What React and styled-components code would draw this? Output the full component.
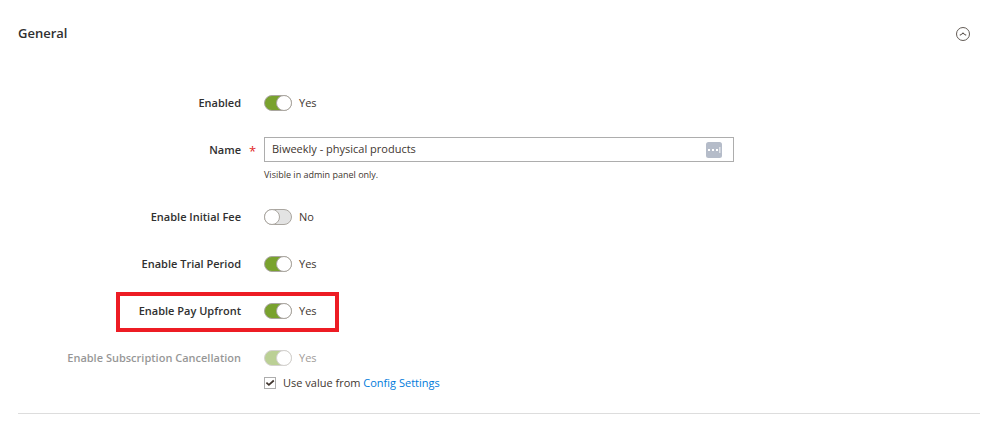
import React, { useState } from 'react'
import styled, { createGlobalStyle, css } from 'styled-components'

function ToggleField({ id, label, defaultOn, disabled, highlighted, children }) {
    const [on, setOn] = useState(defaultOn)

    return (
        <Field>
            <Label htmlFor={id} $muted={disabled}>{label}</Label>
            <Control>
                {highlighted && <Highlight />}
                <ToggleRow $muted={disabled}>
                    <Switch
                        id={id}
                        type="checkbox"
                        role="switch"
                        checked={on}
                        disabled={disabled}
                        onChange={(e) => setOn(e.target.checked)}
                    />
                    <span>{on ? 'Yes' : 'No'}</span>
                </ToggleRow>
                {children}
            </Control>
        </Field>
    )
}

function App() {
    const [open, setOpen] = useState(true)

    return (
        <>
            <GlobalStyle />
            <Section>
                <Header>
                    <Title>General</Title>
                    <IconButton
                        type="button"
                        aria-label="Toggle General section"
                        aria-expanded={open}
                        onClick={() => setOpen(!open)}
                    >
                        <svg width="14" height="14" viewBox="0 0 14 14" fill="none" stroke="#514943">
                            <circle cx="7" cy="7" r="6.5" strokeWidth="0.9" />
                            <path d="M3.8 8.2 Q5.8 7.4 7 6 Q8.2 7.4 10.2 8.2" strokeWidth="1.1" />
                        </svg>
                    </IconButton>
                </Header>
                {open && (
                    <Fields>
                        <ToggleField id="enabled" label="Enabled" defaultOn />
                        <Field>
                            <Label htmlFor="name">
                                Name
                                <Required>*</Required>
                            </Label>
                            <Control>
                                <InputBox>
                                    <TextInput id="name" type="text" defaultValue="Biweekly - physical products" />
                                    <IconButton type="button" aria-label="Fill in">
                                        <svg width="16" height="16" viewBox="0 0 16 16">
                                            <rect width="16" height="16" rx="2.5" fill="#b5bcc9" />
                                            <g fill="#fff">
                                                <rect x="2" y="7" width="2" height="2" />
                                                <rect x="6" y="7" width="2" height="2" />
                                                <rect x="10" y="7" width="2" height="2" />
                                                <rect x="13" y="5" width="1.5" height="6" opacity="0.6" />
                                            </g>
                                        </svg>
                                    </IconButton>
                                </InputBox>
                                <Note>Visible in admin panel only.</Note>
                            </Control>
                        </Field>
                        <ToggleField id="initial-fee" label="Enable Initial Fee" defaultOn={false} />
                        <ToggleField id="trial-period" label="Enable Trial Period" defaultOn />
                        <ToggleField id="pay-upfront" label="Enable Pay Upfront" defaultOn highlighted />
                        <ToggleField id="cancellation" label="Enable Subscription Cancellation" defaultOn disabled>
                            <ConfigRow>
                                <CheckWrap>
                                    <Checkbox id="use-config" type="checkbox" defaultChecked />
                                    <CheckMark width="12" height="12" viewBox="0 0 12 12" fill="none" stroke="#41362f">
                                        <path d="M2.4 5.6 L4.9 7.9 L9.8 3.5" strokeWidth="1.7" />
                                    </CheckMark>
                                </CheckWrap>
                                <span>
                                    <label htmlFor="use-config">Use value from </label>
                                    <Link href="#config">Config Settings</Link>
                                </span>
                            </ConfigRow>
                        </ToggleField>
                    </Fields>
                )}
            </Section>
        </>
    )
}

export default App

const GlobalStyle = createGlobalStyle`
*, *::before, *::after {
    box-sizing: border-box;
}
body {
    margin: 0;
    background: #fff;
    color: #41362f;
    font-family: "Open Sans", "Noto Sans", sans-serif;
    font-size: 11px;
    line-height: 16px;
}
`

const Section = styled.section`
margin: 0 20px 0 18px;
padding: 22px 0;
border-bottom: 1px solid #ddd;
`

const Header = styled.div`
display: flex;
align-items: center;
justify-content: space-between;
height: 24px;
padding-right: 10px;
`

const Title = styled.h2`
margin: 0;
padding-bottom: 2px;
font-size: 13px;
font-weight: 600;
color: #303030;
`

const IconButton = styled.button`
display: flex;
padding: 0;
border: 0;
background: transparent;
cursor: pointer;
`

const Fields = styled.div`
display: flex;
flex-direction: column;
gap: 22px;
padding-top: 44px;
`

const Field = styled.div`
display: grid;
grid-template-columns: 223fr 470fr 223fr;
column-gap: 23px;
`

const Label = styled.label`
position: relative;
justify-self: end;
line-height: 25px;
font-weight: 600;
color: #303030;
white-space: nowrap;
opacity: ${(p) => (p.$muted ? 0.5 : 1)};
`

const Required = styled.span`
position: absolute;
left: 100%;
margin-left: 8px;
color: #e22626;
font-size: 13px;
font-weight: 400;
line-height: 29px;
`

const Control = styled.div`
position: relative;
min-width: 0;
`

const ToggleRow = styled.div`
display: flex;
align-items: center;
gap: 7px;
height: 25px;
opacity: ${(p) => (p.$muted ? 0.5 : 1)};
`

const Switch = styled.input`
appearance: none;
display: flex;
width: 28px;
height: 16px;
margin: 0;
border: 1px solid #aaa6a0;
border-radius: 8px;
background: #e3e3e3;

&::before {
    content: "";
    width: 16px;
    height: 16px;
    margin: -1px;
    border: 1px solid #aaa6a0;
    border-radius: 50%;
    background: #fff;
}

${(p) => p.checked && css`
    justify-content: flex-end;
    background: #79a22e;
`}
`

const Highlight = styled.div`
position: absolute;
top: -6px;
left: -148px;
width: 223px;
height: 40px;
border: 4px solid #ed1c24;
pointer-events: none;
`

const InputBox = styled.div`
display: flex;
align-items: center;
height: 25px;
padding-right: 11px;
border: 1px solid #adadad;
`

const TextInput = styled.input`
flex: 1;
min-width: 0;
padding: 0 8px 2px 7px;
border: 0;
outline: 0;
background: transparent;
color: #41362f;
font: inherit;
`

const Note = styled.p`
margin: 6px 0 0;
font-size: 9px;
line-height: 14px;
`

const ConfigRow = styled.div`
display: flex;
align-items: center;
gap: 7px;
margin-top: 5px;
`

const CheckWrap = styled.span`
display: grid;
width: 12px;
height: 12px;
`

const Checkbox = styled.input`
appearance: none;
grid-area: 1 / 1;
width: 12px;
height: 12px;
margin: 0;
border: 1px solid #adadad;
background: #fff;
`

const CheckMark = styled.svg`
grid-area: 1 / 1;
pointer-events: none;

${Checkbox}:not(:checked) + & {
    display: none;
}
`

const Link = styled.a`
color: #007bdb;
text-decoration: none;
`
